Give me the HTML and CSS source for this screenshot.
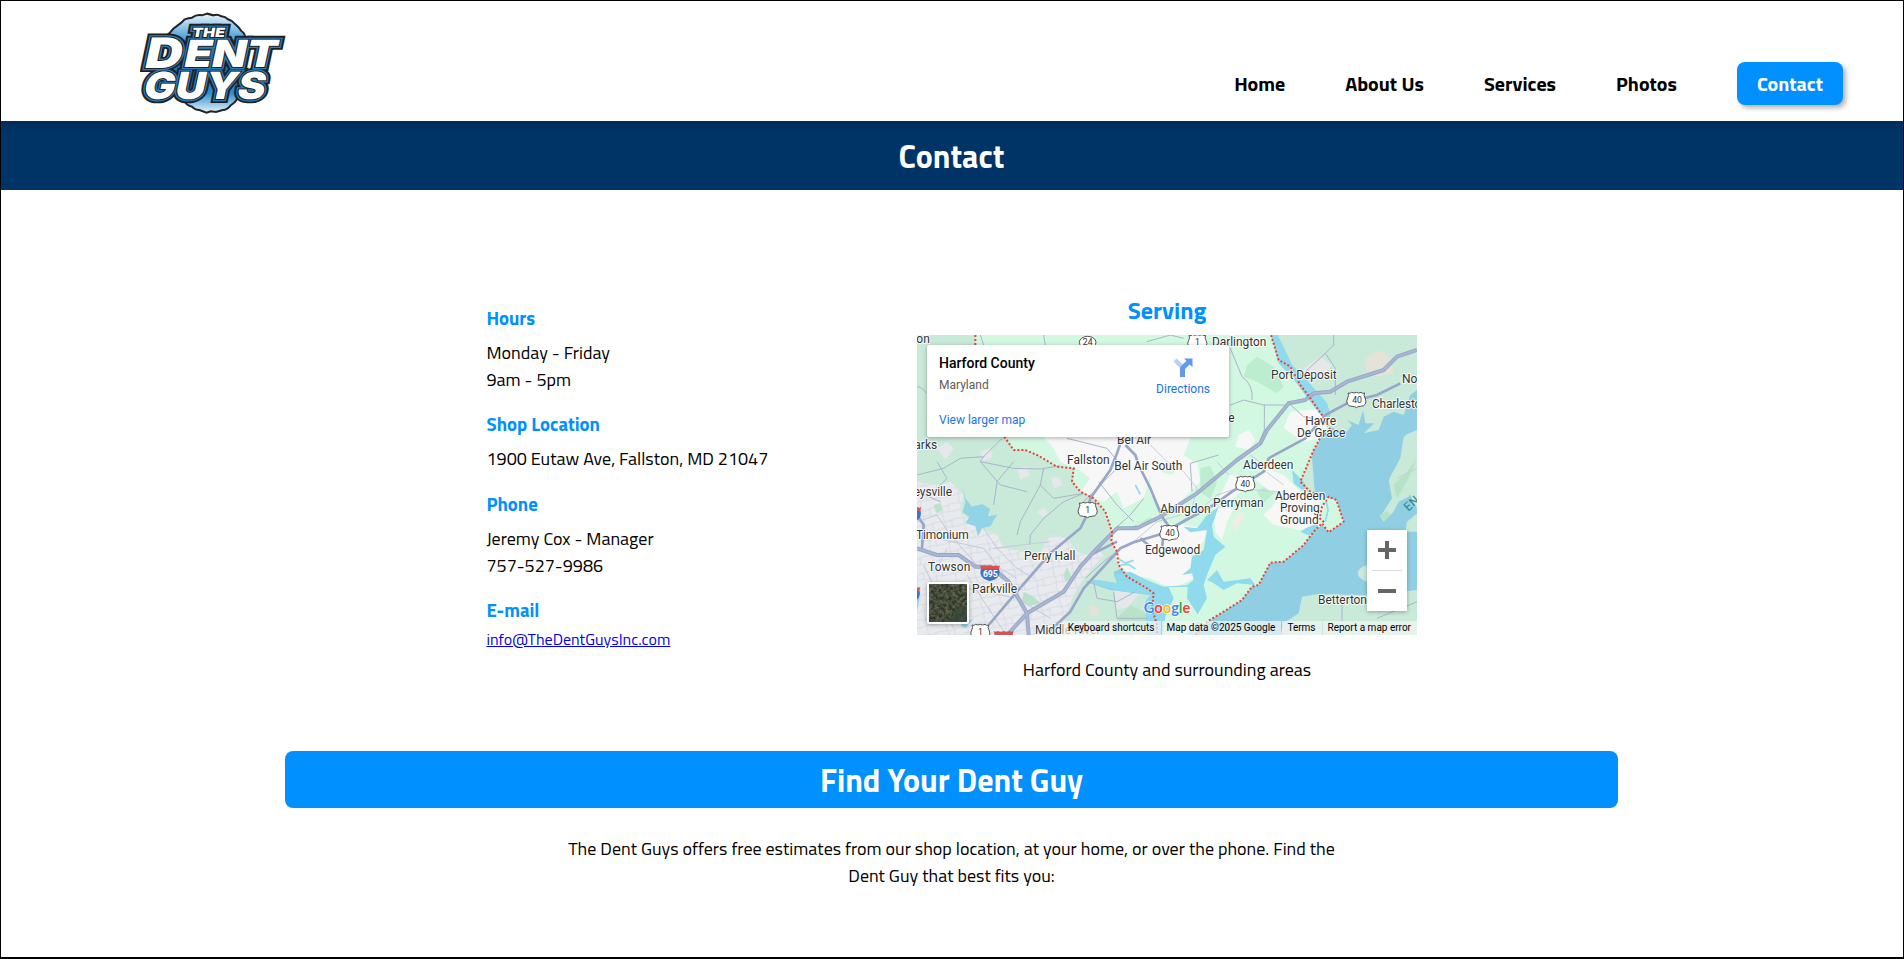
FILE: index.html
```html
<!DOCTYPE html>
<html lang="en">
<head>
<meta charset="utf-8">
<title>Contact | The Dent Guys</title>
<link rel="stylesheet" href="styles.css">
</head>
<body>
<div class="page">
  <header class="header">
    <svg class="logo" viewBox="60 36 441 306" role="img" aria-label="The Dent Guys">
      <defs>
        <linearGradient id="disc" x1="0" y1="0" x2="0" y2="1">
          <stop offset="0" stop-color="#e8f4fc"/><stop offset=".3" stop-color="#2b8fd0"/>
          <stop offset=".6" stop-color="#0a73bd"/><stop offset=".8" stop-color="#2d8dce"/><stop offset="1" stop-color="#e8f3fa"/>
        </linearGradient>
        <g id="words">
          <text class="logo-the" x="234" y="110" textLength="98" lengthAdjust="spacingAndGlyphs" transform="skewX(-10)">THE</text>
          <text class="logo-d" x="112" y="204" textLength="112" lengthAdjust="spacingAndGlyphs" transform="skewX(-12)">D</text>
          <text class="logo-dent" x="230" y="200" textLength="278" lengthAdjust="spacingAndGlyphs" transform="skewX(-12)">ENT</text>
          <text class="logo-guys" x="129" y="296" textLength="364" lengthAdjust="spacingAndGlyphs" transform="skewX(-12)">GUYS</text>
        </g>
      </defs>
      <path d="M138 108q12-8 22-22q12-9 24-18l10-10q12-5 22-5q14-10 30-7l16-5 18 5q12-5 24 3q12 1 20 9q14 4 22 15q12 10 18 20q14 8 12 28v150q-12 18-24 25q-8 14-20 20q-10 14-24 14l-20 6-16-2-12 4-22-8q-14 0-22-10q-16-4-22-16q-14-10-22-22z" fill="url(#disc)" stroke="#202329" stroke-width="6"/>
      <use href="#words" class="logo-outer"/>
      <use href="#words" class="logo-blue"/>
      <use href="#words" class="logo-inner"/>
      <use href="#words" class="logo-white"/>
    </svg>
    <nav class="nav">
      <a class="nav-link">Home</a>
      <a class="nav-link">About Us</a>
      <a class="nav-link">Services</a>
      <a class="nav-link">Photos</a>
      <a class="nav-link nav-button">Contact</a>
    </nav>
  </header>

  <div class="banner"><h1 class="banner-title">Contact</h1></div>

  <main class="main">
    <section class="columns">
      <div class="info">
        <h3 class="info-title">Hours</h3>
        <p class="info-text">Monday - Friday<br>9am - 5pm</p>
        <h3 class="info-title">Shop Location</h3>
        <p class="info-text">1900 Eutaw Ave, Fallston, MD 21047</p>
        <h3 class="info-title">Phone</h3>
        <p class="info-text">Jeremy Cox - Manager<br>757-527-9986</p>
        <h3 class="info-title">E-mail</h3>
        <a class="email" href="#">info@TheDentGuysInc.com</a>
      </div>

      <div class="serving">
        <h2 class="serving-title">Serving</h2>
        <div class="map">
          <svg class="map-canvas" viewBox="0 0 1500 900">
            <defs>
              <pattern id="streets" width="58" height="46" patternUnits="userSpaceOnUse" patternTransform="rotate(-12)">
                <path d="M0 10L30 14L58 10M20 0L24 24L20 46M0 34L24 30L58 34M44 10L42 34" fill="none" stroke="#d3d9e3" stroke-width="2.500"/>
              </pattern>
              <g id="us-shield"><path d="M-25-20q6 3 11-2q7 4 14 0q7 4 14 0q5 5 11 2q-4 8 1 15q5 9 1 18q-4 7-14 7q-9 0-13 4q-4-4-13-4q-10 0-14-7q-4-9 1-18q5-7 1-15z" fill="#fff" stroke="#555" stroke-width="3"/></g>
              <g id="i-shield"><path d="M-27-14H27Q36 14 0 23Q-36 14-27-14Z" fill="#3d74c6"/><path d="M-30-24q6 4 12 0q9 4 18 0q9 4 18 0q6 4 12 0l-3 11h-54z" fill="#d9534b"/></g>
            </defs>
            <rect width="1500" height="900" fill="#c9e9d9"/>
            <!-- Baltimore suburbs -->
            <path d="M0 440L60 450L100 440L140 480L130 530L190 580L240 600L260 640L330 650L360 670L400 600L450 610L480 650L510 660L540 640L560 660L500 730L470 780L430 900H0Z" fill="#e8eaed"/>
            <path d="M0 440L60 450L100 440L140 480L130 530L190 580L240 600L260 640L330 650L360 670L400 600L450 610L480 650L510 660L540 640L560 660L500 730L470 780L430 900H0Z" fill="url(#streets)"/>
            <path d="M60 340l30-20 20 20-25 35zM190 350l30-10 5 30-30 8zM300 400l30-5 10 25-30 15zM360 530l20-12 15 15-18 14zM400 430l25-5 12 25-25 10zM590 760l70-15 15 20-40 50-40 10zM1160 100l50-35 35 25-30 45-50-5z" fill="#e4e8ea"/>
            <path d="M1345 70l40-25 35 25 10 45-50 10-35-20zM520 810l25 5-5 30-25-5z" fill="#e5e2d7"/>
            <path d="M50 510l20-5 8 20-20 10zM320 770l30 15 20 20-30 8-25-15zM440 720l10-25 15 35-20 10zM600 850l40-40 50 25 10 65h-90z" fill="#b9e3c9"/>
            <!-- bay -->
            <path d="M1062 0H1082L1125 90L1160 125L1230 205L1240 240L1232 275L1290 290L1305 270L1290 255L1325 270L1338 225L1345 265L1372 265L1340 295L1385 285L1400 245L1430 230L1460 240L1480 180L1500 165V285L1465 300L1458 360L1420 425L1425 480L1455 455L1480 480L1500 520V765L1350 780L1200 778L1155 785L1145 835L1100 865L1090 900H720L690 850L685 800L700 780L580 765L505 740L540 735L600 745L590 710L640 690L1200 560L1180 300L1215 240L1150 150L1080 75Z" fill="#90cfe3"/>
            <path d="M135 450l10 40 20 25 30-8 25 15-8 22 28-5-20 35-25 5-12 25-8-30-30-10 12-18-20-15 8-30zM0 770l8 20-8 40zM130 870l40-20-25 30z" fill="#90d4e6"/>
            <path d="M1500 285L1460 305L1450 370L1415 435L1425 490L1390 545L1400 560L1430 530L1445 500L1475 485L1500 440ZM1500 535L1470 560L1465 590H1500ZM1322 710q15-22 35-20v50q-35-5-35-30z" fill="#c9e9d9"/>
            <path d="M1500 370L1470 410L1430 450L1440 490L1470 440ZM1388 540l22-12 10 12-18 18z" fill="#b6e3c8"/>
            <!-- Harford County -->
            <path d="M175 0L175 100L262 305L290 345L325 345L360 360L420 395L470 400L465 440L490 470L530 490L565 530L585 590L583 620L600 650L605 690L630 725L690 760L710 775L705 820L720 870V900H835L870 860L920 830L975 795L1005 755L1025 750L1060 683L1100 680L1160 630L1190 590L1215 570L1235 592L1280 560L1258 495L1225 487L1180 470L1150 440L1190 345L1215 305L1240 280L1215 240L1180 190L1150 150L1120 95L1085 75L1062 0Z" fill="#d3f8e2"/>
            <path d="M990 90l30-25 50 30 30 60-20 20-60-35-40-15zM850 400l30-8 20 50-20 50-30-20zM620 430l20-5 35 60-15 15-40-50zM740 420l25 10-10 60-25-20zM1020 470l30-20 30 15-40 40zM660 570l40-25 20 15-40 20z" fill="#bcedce"/>
            <path d="M380 306H600L820 310L800 360L830 380L800 440L760 400L700 420L680 490L620 520L600 470L560 500L530 490L490 470L520 430L480 400L430 380L410 340ZM700 400L760 420L840 380L850 440L790 500L740 530L700 480ZM585 590L700 560L800 570L870 580L860 620L820 650L830 730L780 755L740 750L700 730L640 720L600 680ZM940 420L1020 430L1050 400L1100 420L1150 470L1060 470L1010 430L950 490L900 500ZM890 520L950 520L930 560L915 615L895 590ZM1060 520L1110 460L1210 500L1205 570L1150 585L1070 570L1040 540ZM1100 280L1120 230L1220 220L1240 260L1210 310L1160 320ZM965 300l30-15 20 30-20 30-40-10z" fill="#f7f7f8"/>
            <!-- rivers and inlets -->
            <path d="M1062 0H1082L1125 90L1160 125L1230 205L1240 240L1232 275L1215 245L1180 200L1135 140L1085 85ZM800 575L840 580L870 540L905 515L885 570L890 605L925 635L895 660L870 720L860 750L870 790L835 850L860 880L835 900H690L685 800L700 780L620 770L540 750L505 740L540 735L600 745L590 720L640 710L690 735L740 755L810 750L830 735L825 715L795 720L820 700L825 665L860 645L870 585L820 592ZM870 735L900 705L920 740L1000 730L1015 750L960 745L920 765L890 745ZM1125 405l35 35 15 30-20-5-25-20zM1150 590l25-15 30-10-8 25-25 10z" fill="#90daee"/>
            <path d="M735 900L745 845L770 790L755 757L812 755L810 790L850 850L810 900Z" fill="#d3f8e2"/>
            <path d="M945 560l25-30 15 10-30 50z" fill="#f0eee4"/>
            <path d="M605 672l20 12 25-8M610 690l25-2 20 14M1225 560l8-35-5-25M655 450l15 28M1165 580l12 20" fill="none" stroke="#90daee" stroke-width="5"/>
            <!-- local roads -->
            <g fill="none" stroke="#a9b5c9" stroke-width="3">
              <path d="M0 155q15 0 28 20M0 420L80 400L130 370L200 365L255 310M200 365L190 380L290 400L370 402L430 392M290 380L240 440L230 510M380 400L370 450L410 490L500 475M500 475L440 500L380 550L340 600L338 628M370 450L310 560L300 600M190 380L250 450L330 470M60 380L90 430L40 480M0 470L70 500M500 500L560 440L600 400M545 440L600 510L650 560M620 400L570 340L450 310M680 490L640 540L600 575M820 385L825 470M905 360L820 385M940 210L980 195L1040 210L1110 210M1042 210V285L1020 340M1005 195Q1010 150 975 125L940 40M1110 200L1160 245L1210 255M1165 110L1225 55L1250 30V0M1225 55L1255 100V180M200 30L190 0M380 0L385 30M690 20L760 0L800 10M505 730L560 680L600 650M530 740L540 790L600 800L655 770M590 770L600 850L690 850M1275 790V858M1500 800L1380 850"/>
              <path d="M830 540L900 480L960 460L1080 470L1110 530M900 380L935 420M1000 360L1040 390L1040 405L1100 450M750 590L820 540L840 460L800 410L750 380L680 310M650 620L720 560L790 540M1500 400L1440 430" stroke="#c7cfdd"/>
              <path d="M0 560L60 540L100 600L180 690L250 700L300 730M200 580L240 640L300 700L350 730M230 640L400 620M60 610L200 640L300 770M60 700L90 640M100 750L300 790L400 850M150 720L240 860L270 900M20 690L110 880" stroke="#c3cbdb"/>
            </g>
            <!-- highways -->
            <g class="road">
              <path d="M625 330L655 360L665 390L700 460L735 545L760 580M615 310L600 355L580 405L520 490L505 550L490 580L400 655L300 770L215 870M0 540L20 570L15 640M660 575L640 580" stroke-width="8"/>
              <path d="M385 900L460 830L500 760L610 640L650 622L740 595L780 570L890 510L945 470L1040 410L1055 370L1165 310L1225 240L1300 200L1380 180L1450 145M520 660L600 620M740 595L735 640M670 610L700 635" stroke-width="8"/>
              <path d="M0 640L60 660L125 660L175 695L220 695L275 740L330 835L335 900M270 900L330 835L440 770L490 695L540 640L600 580H660L730 545L840 475L900 425L960 375L1030 325L1050 285L1115 205L1165 195L1190 175L1240 170L1290 140L1400 105L1440 65L1500 45" stroke-width="12"/>
            </g>
            <path class="road-core" d="M0 640L60 660L125 660L175 695L220 695L275 740L330 835L335 900M270 900L330 835L440 770L490 695L540 640L600 580H660L730 545L840 475L900 425L960 375L1030 325L1050 285L1115 205L1165 195L1190 175L1240 170L1290 140L1400 105L1440 65L1500 45"/>
            <path class="border" d="M175 0V40M262 305L290 345L325 345L360 360L420 395L470 400L465 440L490 470L530 490L565 530L585 590L583 620L600 650L605 690L630 725L690 760L710 775L705 820L720 870V900M835 900L870 860L920 830L975 795L1005 755L1025 750L1060 683L1100 680L1160 630L1190 590L1215 565L1235 592L1280 560L1258 495L1235 485L1215 515L1208 550L1225 565M1225 490L1180 470L1150 440L1190 345L1210 308L1240 285L1215 240L1180 190L1150 150L1120 95L1085 75L1062 0"/>
            <g class="shields">
              <ellipse cx="512" cy="22" rx="25" ry="18" fill="#fff" stroke="#555" stroke-width="3"/><text x="512" y="31">24</text>
              <use href="#us-shield" x="841" y="21"/><text x="841" y="31">1</text>
              <use href="#us-shield" x="512" y="524"/><text x="512" y="534">1</text>
              <use href="#us-shield" x="757" y="593"/><text x="759" y="603">40</text>
              <use href="#us-shield" x="985" y="446"/><text x="985" y="456">40</text>
              <use href="#us-shield" x="1318" y="194"/><text x="1320" y="204">40</text>
              <use href="#us-shield" x="190" y="890"/><text x="190" y="900">1</text>
              <use href="#i-shield" x="219" y="715"/><text class="interstate" x="220" y="725">695</text>
              <use href="#i-shield" x="-17" y="540"/><use href="#i-shield" x="-20" y="780"/><use href="#i-shield" x="260" y="912"/>
            </g>
            <g class="labels">
              <text x="-2" y="24">on</text>
              <text x="885" y="33" textLength="163">Darlington</text>
              <text x="1062" y="132" textLength="197">Port Deposit</text>
              <text x="1455" y="144">North East</text>
              <text x="1365" y="219" textLength="194">Charlestown</text>
              <text x="934" y="261">e</text>
              <text x="1165" y="270" textLength="92">Havre</text>
              <text x="1140" y="306" textLength="145">De Grace</text>
              <text x="600" y="327" textLength="102">Bel Air</text>
              <text x="-8" y="342">arks</text>
              <text x="450" y="388" textLength="128">Fallston</text>
              <text x="592" y="405" textLength="204">Bel Air South</text>
              <text x="978" y="402" textLength="151">Aberdeen</text>
              <text x="-10" y="483" textLength="115">eysville</text>
              <text x="1074" y="495" textLength="151">Aberdeen</text>
              <text x="1089" y="532" textLength="119">Proving</text>
              <text x="1089" y="567" textLength="116">Ground</text>
              <text x="888" y="517" textLength="152">Perryman</text>
              <text x="730" y="534" textLength="151">Abingdon</text>
              <text x="-3" y="612" textLength="158">Timonium</text>
              <text x="684" y="657" textLength="166">Edgewood</text>
              <text x="321" y="675" textLength="154">Perry Hall</text>
              <text x="33" y="708" textLength="127">Towson</text>
              <text x="165" y="774" textLength="135">Parkville</text>
              <text x="1203" y="808" textLength="147">Betterton</text>
              <text x="354" y="898" textLength="196">Middle River</text>
              <text class="water-label" transform="translate(1474 530) rotate(-42)">EN</text>
            </g>
            <text class="google" x="680" y="834" textLength="140" lengthAdjust="spacingAndGlyphs"><tspan fill="#4285f4">G</tspan><tspan fill="#ea4335">o</tspan><tspan fill="#fbbc05">o</tspan><tspan fill="#4285f4">g</tspan><tspan fill="#34a853">l</tspan><tspan fill="#ea4335">e</tspan></text>
          </svg>

          <div class="place-card">
            <div class="place-text">
              <strong class="place-name">Harford County</strong>
              <span class="place-region">Maryland</span>
              <a class="place-link">View larger map</a>
            </div>
            <a class="directions">
              <svg class="directions-icon" viewBox="0 0 22 22"><path d="M1.500 4.500L4.500 1.500L10.500 7L11 11L9 12Z" fill="#b7d1f7"/><path d="M12 1.500H20.500V10L17.500 7.500L13 12V20H8V12Q8 10 9.500 8.500L14.500 4Z" fill="#609ae8"/></svg>
              Directions
            </a>
          </div>

          <div class="satellite">
            <svg class="satellite-image" viewBox="0 0 38 38">
              <filter id="terrain" x="0" y="0" width="1" height="1" color-interpolation-filters="sRGB"><feTurbulence type="fractalNoise" baseFrequency=".3" numOctaves="4" seed="7"/><feColorMatrix values=".5 0 0 0 .02  .45 0 0 0 .07  .35 0 0 0 .05  0 0 0 0 1"/></filter>
              <rect width="38" height="38" filter="url(#terrain)"/>
              <path d="M38 22L28 25L20 38H38Z" fill="#344a3c" opacity=".7"/>
            </svg>
          </div>

          <div class="zoom">
            <svg class="zoom-icon" viewBox="0 0 18 18"><path d="M7 0h4v7h7v4h-7v7H7v-7H0V7h7z" fill="#666"/></svg>
            <i class="zoom-line"></i>
            <svg class="zoom-icon" viewBox="0 0 18 18"><path d="M0 7h18v4H0z" fill="#666"/></svg>
          </div>

          <div class="credits">
            <span class="credit">Keyboard shortcuts</span><span class="credit">Map data ©2025 Google</span><span class="credit">Terms</span><span class="credit">Report a map error</span>
          </div>
        </div>
        <p class="caption">Harford County and surrounding areas</p>
      </div>
    </section>

    <h2 class="find">Find Your Dent Guy</h2>
    <p class="find-text">The Dent Guys offers free estimates from our shop location, at your home, or over the phone. Find the Dent Guy that best fits you:</p>
  </main>
</div>
</body>
</html>
```
FILE: styles.css
```css
* { box-sizing: border-box; }
body { margin: 0; background: #fff; color: #000; font-family: "Titillium Web", Roboto, sans-serif; }
h1, h2, h3, p { margin: 0; }
.page { height: 959px; border: 1px solid #000; border-bottom-width: 2px; overflow: hidden; }

.header { position: relative; z-index: 1; display: flex; justify-content: space-between; height: 120px; padding: 11px 60px 0 139px; background: #fff; box-shadow: 0 2px 10px rgba(0, 0, 0, .18); }
.logo { width: 147px; height: 102px; }
.logo text { font-family: Inter, sans-serif; font-weight: 900; }
.logo-the { font-size: 38px; }
.logo-d { font-size: 126px; }
.logo-dent { font-size: 112px; }
.logo-guys { font-size: 112px; }
.logo-outer { fill: #1d2026; stroke: #1d2026; stroke-width: 24; stroke-linejoin: miter; }
.logo-blue { fill: #1876b8; stroke: #2b7eb8; stroke-width: 13; }
.logo-inner { fill: #1d2026; stroke: #1d2026; stroke-width: 6; }
.logo-white { fill: #fff; }

.nav { display: flex; align-items: center; gap: 60px; height: 43px; margin-top: 50px; }
.nav-link { font-size: 20px; font-weight: 700; line-height: 27px; white-space: nowrap; }
.nav-button { height: 43px; padding: 8px 20px; border-radius: 8px; background: #0090ff; color: #fff; box-shadow: 3px 3px 5px rgba(0, 0, 0, .3); }

.banner { height: 69px; padding-right: 1px; background: #036; color: #fff; text-align: center; }
.banner-title { font-size: 32px; line-height: 70px; }

.main { padding: 102px 1px 0 0; }
.columns { display: flex; justify-content: center; gap: 149px; height: 391px; }
.info { width: 282px; padding: 12px 0 0 .5px; white-space: nowrap; }
.info-title { margin-bottom: 6.9px; color: #0090ff; font-size: 18.72px; line-height: 28px; }
.info-text { margin-bottom: 17.5px; font-size: 18px; line-height: 27px; }
.email { display: block; margin-top: -4px; color: #00e; font-size: 16px; line-height: 24px; }

.serving { width: 500px; text-align: center; }
.serving-title { margin-bottom: 6px; color: #0090ff; font-size: 24px; line-height: 37px; }
.caption { margin-top: 21px; font-size: 18px; line-height: 27px; }

.map { position: relative; height: 300px; overflow: hidden; font-family: Roboto, sans-serif; text-align: left; }
.map-canvas { display: block; width: 500px; height: 300px; }
.road { fill: none; stroke: #98a7c8; stroke-linejoin: round; }
.road-core { fill: none; stroke: #a9b7d3; stroke-width: 6; stroke-linejoin: round; }
.border { fill: none; stroke: #ea4335; stroke-width: 6; stroke-dasharray: 6 6; }
.shields { fill: #333; font-size: 26px; text-anchor: middle; }
.interstate { fill: #fff; font-weight: 700; }
.labels { fill: #333; font-size: 36px; stroke: #fff; stroke-opacity: .85; stroke-width: 6; stroke-linejoin: round; paint-order: stroke; }
.water-label { fill: #1b8795; stroke: none; }
.google { font-family: Lato, sans-serif; font-size: 46px; font-weight: 700; stroke: #fff; stroke-width: 4; paint-order: stroke; }

.place-card { position: absolute; left: 10px; top: 10px; display: flex; justify-content: space-between; width: 302px; height: 92px; padding: 10px 19px 0 12px; border-radius: 2px; background: #fff; box-shadow: 0 1px 4px rgba(0, 0, 0, .3); }
.place-text { display: flex; flex-direction: column; }
.place-name { font-size: 14px; font-weight: 500; line-height: 17px; }
.place-region { margin-top: 5px; color: #5b5b5b; font-size: 12px; line-height: 16px; }
.place-link { margin-top: 19px; color: #1a73e8; font-size: 12px; line-height: 16px; }
.directions { display: flex; flex-direction: column; align-items: center; padding-top: 2px; color: #1a73e8; font-size: 12px; line-height: 16px; }
.directions-icon { width: 22px; height: 22px; margin-bottom: 2px; }

.satellite { position: absolute; left: 10px; top: 247px; width: 42px; height: 42px; border: 2px solid #fff; border-radius: 2px; box-shadow: 0 1px 4px rgba(0, 0, 0, .3); }
.satellite-image { display: block; width: 38px; height: 38px; }
.zoom { position: absolute; left: 450px; top: 195px; display: flex; flex-direction: column; align-items: center; justify-content: space-between; width: 40px; height: 81px; padding: 11px 0; background: #fff; box-shadow: 0 1px 4px rgba(0, 0, 0, .3); }
.zoom-icon { width: 18px; height: 18px; }
.zoom-line { width: 30px; height: 1px; background: #ddd; }
.credits { position: absolute; right: 0; bottom: 0; display: flex; gap: 1px; height: 14px; }
.credit { padding: 0 6px 0 5px; background: rgba(245, 245, 245, .7); font-size: 10px; line-height: 14px; white-space: nowrap; }

.find { width: 1333px; height: 57px; margin: 68px auto 0; border-radius: 8px; background: #0090ff; color: #fff; font-size: 32px; line-height: 58px; text-align: center; }
.find-text { width: 780px; margin: 27px auto 0; font-size: 18px; line-height: 27px; text-align: center; }
```
